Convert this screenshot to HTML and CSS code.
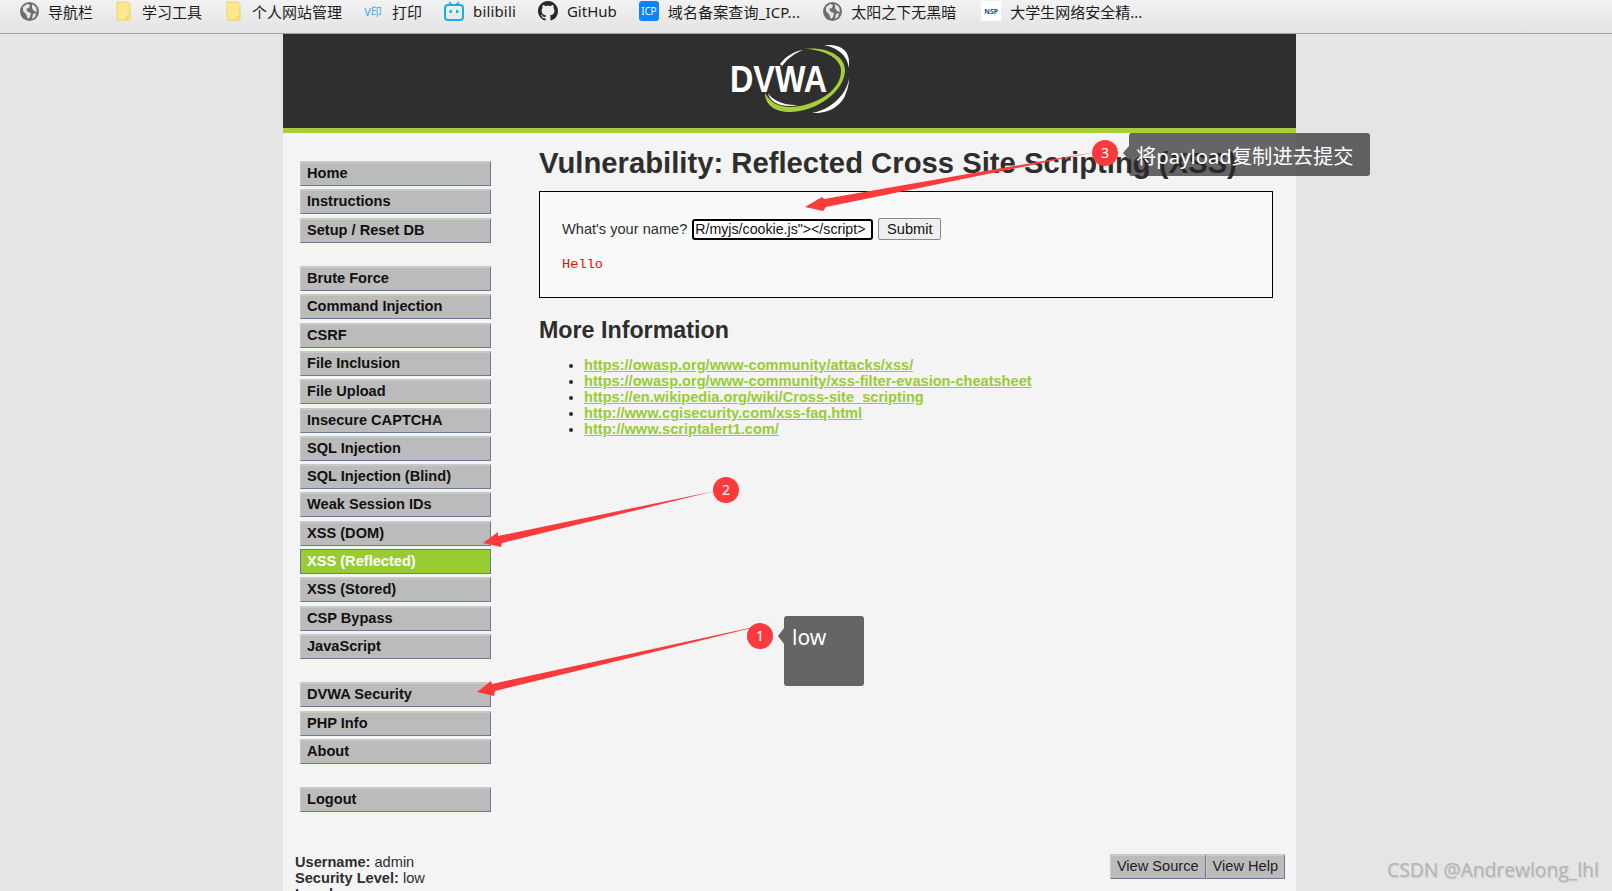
FILE: index.html
```html
<!DOCTYPE html>
<html lang="zh">
<head>
<meta charset="utf-8">
<title>DVWA</title>
<link rel="stylesheet" href="styles.css">
</head>
<body>
<nav class="bookmarks">
  <a class="bm"><span class="ico"><svg width="19" height="19" viewBox="0 0 19 19"><circle cx="9.5" cy="9.5" r="9.5" fill="#6c6f72"/><path d="M3 5l4-3 3 1-1 3-3 1 2 3 3 1-1 4-2 2-2-5-3-3zM12 2l4 3 1 5-3-1-2-3zM13 12l3-1-1 4-3 2z" fill="#e6e6e6"/></svg></span>导航栏</a>
  <a class="bm"><span class="ico"><svg width="15" height="20" viewBox="0 0 15 20"><path class="fold" d="M1 1h11l2 2v16H1z"/><path d="M11 19v-4h3" fill="none" stroke="#f0c94f"/></svg></span>学习工具</a>
  <a class="bm"><span class="ico"><svg width="15" height="20" viewBox="0 0 15 20"><path class="fold" d="M1 1h11l2 2v16H1z"/><path d="M11 19v-4h3" fill="none" stroke="#f0c94f"/></svg></span>个人网站管理</a>
  <a class="bm"><span class="ico vin">V印</span>打印</a>
  <a class="bm"><span class="ico"><svg width="20" height="20" viewBox="0 0 20 20"><path d="M5 1l3 3M15 1l-3 3" stroke="#12b0e8" stroke-width="1.6"/><rect x="1" y="4" width="18" height="15" rx="3" fill="none" stroke="#12b0e8" stroke-width="2"/><rect x="5.5" y="9" width="2.4" height="3" fill="#12b0e8"/><rect x="12" y="9" width="2.4" height="3" fill="#12b0e8"/></svg></span>bilibili</a>
  <a class="bm"><span class="ico"><svg width="20" height="20" viewBox="0 0 16 16"><path fill="#24292e" d="M8 0C3.58 0 0 3.58 0 8c0 3.54 2.29 6.53 5.47 7.59.4.07.55-.17.55-.38 0-.19-.01-.82-.01-1.49-2.01.37-2.53-.49-2.69-.94-.09-.23-.48-.94-.82-1.13-.28-.15-.68-.52-.01-.53.63-.01 1.08.58 1.23.82.72 1.21 1.87.87 2.33.66.07-.52.28-.87.51-1.07-1.78-.2-3.64-.89-3.64-3.95 0-.87.31-1.59.82-2.15-.08-.2-.36-1.02.08-2.12 0 0 .67-.21 2.2.82.64-.18 1.32-.27 2-.27.68 0 1.36.09 2 .27 1.53-1.04 2.2-.82 2.2-.82.44 1.1.16 1.92.08 2.12.51.56.82 1.27.82 2.15 0 3.07-1.87 3.75-3.65 3.95.29.25.54.73.54 1.48 0 1.07-.01 1.93-.01 2.2 0 .21.15.46.55.38A8.013 8.013 0 0016 8c0-4.42-3.58-8-8-8z"/></svg></span>GitHub</a>
  <a class="bm"><span class="ico icp">ICP</span>域名备案查询_ICP...</a>
  <a class="bm"><span class="ico"><svg width="19" height="19" viewBox="0 0 19 19"><circle cx="9.5" cy="9.5" r="9.5" fill="#6c6f72"/><path d="M3 5l4-3 3 1-1 3-3 1 2 3 3 1-1 4-2 2-2-5-3-3zM12 2l4 3 1 5-3-1-2-3zM13 12l3-1-1 4-3 2z" fill="#e6e6e6"/></svg></span>太阳之下无黑暗</a>
  <a class="bm"><span class="ico nsp">NSP</span>大学生网络安全精...</a>
</nav>

<div class="page">
  <header class="masthead">
    <svg class="logo" width="120" height="70" viewBox="730 45 120 70">
      <path fill="#a6ce39" d="M803 49C825 46 845 55 845 70C845 92 815 112 790 112C775 112 765 105 765 93C770 102 778 107 790 107C812 107 842 92 841 70C840 57 822 49 803 49Z"/>
      <path fill="#fff" d="M824 45C840 44 849 50 849 62L849 68C847 55 838 48 824 45Z"/>
      <path fill="#fff" d="M849 78C847 95 830 110 812 113C828 114 842 106 846 93C848 88 849 83 849 78Z"/>
      <path fill="#fff" d="M780 64C786 56 795 51 803 50C795 53 788 58 782 66Z"/>
      <path fill="#fff" d="M768 93C772 100 785 106 798 105C785 108 770 104 768 93Z"/>
      <text class="logo-text" x="730" y="92" textLength="97" lengthAdjust="spacingAndGlyphs">DVWA</text>
    </svg>
  </header>

  <div class="columns">
    <aside class="sidebar">
      <ul class="menu">
        <li><a>Home</a></li>
        <li><a>Instructions</a></li>
        <li><a>Setup / Reset DB</a></li>
      </ul>
      <ul class="menu">
        <li><a>Brute Force</a></li>
        <li><a>Command Injection</a></li>
        <li><a>CSRF</a></li>
        <li><a>File Inclusion</a></li>
        <li><a>File Upload</a></li>
        <li><a>Insecure CAPTCHA</a></li>
        <li><a>SQL Injection</a></li>
        <li><a>SQL Injection (Blind)</a></li>
        <li><a>Weak Session IDs</a></li>
        <li><a>XSS (DOM)</a></li>
        <li class="selected"><a>XSS (Reflected)</a></li>
        <li><a>XSS (Stored)</a></li>
        <li><a>CSP Bypass</a></li>
        <li><a>JavaScript</a></li>
      </ul>
      <ul class="menu menu-tight">
        <li><a>DVWA Security</a></li>
        <li><a>PHP Info</a></li>
        <li><a>About</a></li>
      </ul>
      <ul class="menu">
        <li><a>Logout</a></li>
      </ul>
    </aside>

    <main class="content">
      <h1>Vulnerability: Reflected Cross Site Scripting (XSS)</h1>
      <div class="vuln">
        <form class="vuln-form">
          <label>What's your name?</label>
          <input class="name-input" type="text" value='R/myjs/cookie.js"&gt;&lt;/script&gt;'>
          <button class="submit" type="button">Submit</button>
        </form>
        <pre class="hello">Hello</pre>
      </div>
      <h2>More Information</h2>
      <ul class="links">
        <li><a>https://owasp.org/www-community/attacks/xss/</a></li>
        <li><a>https://owasp.org/www-community/xss-filter-evasion-cheatsheet</a></li>
        <li><a>https://en.wikipedia.org/wiki/Cross-site_scripting</a></li>
        <li><a>http://www.cgisecurity.com/xss-faq.html</a></li>
        <li><a>http://www.scriptalert1.com/</a></li>
      </ul>
    </main>
  </div>

  <footer class="foot">
    <div class="status">
      <div><b>Username:</b> admin</div>
      <div><b>Security Level:</b> low</div>
      <div><b>Locale:</b> en</div>
    </div>
    <div class="view-btns">
      <a class="view">View Source</a><a class="view">View Help</a>
    </div>
  </footer>
</div>

<svg class="marks" width="1612" height="891" viewBox="0 0 1612 891">
  <polygon class="arrow" points="1095,152 824,199 822,197 805,207 823,211 826,207"/>
  <polygon class="arrow" points="715,491 498,536 498,532 483,543 501,547 502,543"/>
  <polygon class="arrow" points="772,623 492,684 491,681 477,692 494,696 495,691"/>
  <polygon class="tip" points="784,628 778,636 784,644"/>
  <circle class="badge" cx="1105" cy="153" r="13"/>
  <circle class="badge" cx="726" cy="490" r="13"/>
  <circle class="badge" cx="760" cy="636" r="13"/>
  <polygon class="tip" points="1129,146 1123,153 1129,160"/>
  <text class="badge-num" x="1105" y="158">3</text>
  <text class="badge-num" x="726" y="495">2</text>
  <text class="badge-num" x="760" y="641">1</text>
</svg>
<div class="callout callout-low">low</div>
<div class="callout callout-payload">将payload复制进去提交</div>
<div class="watermark">CSDN @Andrewlong_lhl</div>
</body>
</html>
```
FILE: styles.css
```css
* { box-sizing: border-box; }
html, body { margin: 0; height: 891px; overflow: hidden; }
body {
  background: #e5e5e5;
  font-family: "Liberation Sans", Arial, sans-serif;
  font-size: 14.6px;
  color: #2e2e2e;
  position: relative;
}

.bookmarks {
  height: 34px;
  display: flex;
  gap: 21px;
  padding-left: 19px;
  background: linear-gradient(#f2f2f2, #e3e3e3);
  border-bottom: 1px solid #a2a2a2;
  font-family: "Noto Sans", "Noto Sans CJK SC", sans-serif;
  font-size: 15px;
  color: #1c1c1c;
}
.bm { display: flex; align-items: center; height: 22px; white-space: nowrap; }
.bm:nth-child(2) { margin-left: -1px; }
.bm:nth-child(5) { margin-left: 1px; letter-spacing: .15px; }
.bm:nth-child(6) { margin-left: 1px; }
.bm:nth-child(7) { margin-left: 1px; letter-spacing: .15px; }
.bm:nth-child(8) { margin-left: 1px; }
.bm:nth-child(9) { margin-left: 4px; }
.ico { width: 20px; height: 20px; margin-right: 9px; display: flex; align-items: center; justify-content: center; flex: none; }
.fold { fill: #ffe68f; stroke: #f3d25e; }
.vin { color: #3aa6e0; font-size: 11px; width: 20px; }
.icp { background: #0a84ff; color: #fff; font-size: 10px; border-radius: 3px; letter-spacing: -.3px; }
.nsp { background: #fff; color: #23458f; font-size: 7px; font-weight: 700; }

.page { width: 1013px; margin-left: 283px; background: #f4f4f4; height: 857px; }
.masthead {
  height: 99px;
  background: #2f2f2f;
  border-bottom: 5px solid #a6ce39;
  padding: 11px 0 0 447px;
}
.logo { display: block; }
.logo-text { font: 700 37px "Liberation Sans", sans-serif; fill: #fff; }

.columns { display: flex; height: 709px; }
.sidebar { width: 256px; padding: 28px 0 0 17px; flex: none; }
.menu { list-style: none; margin: 0 0 23.5px; padding: 0; width: 191px; }
.menu-tight { margin-bottom: 22.5px; }
.menu li { height: 25px; margin-bottom: 3.3px; }
.menu a {
  display: block;
  height: 25px;
  padding-left: 6px;
  background: #bbb;
  border: 1px solid #c9c9c9;
  border-top-width: 2px;
  border-right-color: #687a94;
  border-bottom-color: #687a94;
  font-weight: 700;
  font-size: 14.6px;
  line-height: 21px;
  color: #111;
}
.menu .selected a { background: #9c3; border-color: #687a94; border-top-width: 1px; color: #fff; line-height: 22px; }

.content { flex: 1; }
h1 { margin: 0; padding-top: 11px; height: 58px; font-size: 29.25px; line-height: 38px; font-weight: 700; }
.vuln {
  width: 734px;
  height: 107px;
  border: 1px solid #000;
  background: #f9fbfa;
  padding: 26px 0 0 22px;
}
.vuln-form { display: flex; align-items: center; height: 22px; }
.vuln-form label { margin-right: 5px; }
.name-input {
  width: 181px;
  height: 21px;
  padding: 0 1px;
  border: 2px solid #000;
  border-radius: 3px;
  outline: 0;
  font: 14.2px "Liberation Sans", sans-serif;
  color: #111;
  background: #fff;
}
.submit {
  width: 63px;
  height: 22px;
  margin-left: 5px;
  padding: 0;
  border: 1px solid #8a8a8a;
  border-radius: 2px;
  background: #efefef;
  font: 14.6px "Liberation Sans", sans-serif;
  color: #111;
}
.hello { margin: 16px 0 0; font: 13.7px/18px "Liberation Mono", monospace; color: #f00; }
h2 { margin: 17px 0 0; font-size: 23.25px; line-height: 30px; font-weight: 700; }
.links { margin: 12px 0 0; padding: 0 0 0 45px; line-height: 16px; }
.links a { color: #99cc33; font-weight: 700; text-decoration: underline; }

.foot { display: flex; justify-content: space-between; padding: 0 11px 0 12px; }
.status { line-height: 16px; margin-top: 12px; }
.view-btns { display: flex; margin-top: 12px; }
.view {
  height: 25px;
  padding: 0 6px;
  background: #bbb;
  border: 1px solid #c9c9c9;
  border-top-width: 2px;
  border-right-color: #687a94;
  border-bottom-color: #687a94;
  line-height: 21px;
  color: #222;
}

.marks { position: absolute; left: 0; top: 0; }
.arrow { fill: #fb3a3c; }
.tip { fill: #646464; }
.badge { fill: #fb3a3c; }
.badge-num { font: 14px "Noto Sans", sans-serif; fill: #fff; text-anchor: middle; }
.callout {
  position: absolute;
  background: rgba(40, 40, 40, .7);
  color: #fff;
  border-radius: 3px;
  font-family: "Noto Sans", "Noto Sans CJK SC", sans-serif;
  font-size: 21px;
  line-height: 28px;
}
.callout-low { left: 784px; top: 616px; width: 80px; height: 70px; padding: 7px 8px; }
.callout-payload { left: 1129px; top: 133px; width: 241px; height: 43px; padding: 9px 7px 0; font-size: 20.3px; white-space: nowrap; }
.watermark {
  position: absolute;
  left: 1387px;
  top: 856px;
  font: 19.3px/28px "Open Sans", sans-serif;
  color: #b4b4b4;
  text-shadow: 1px 1px 1px #ccc;
  white-space: nowrap;
}
```
